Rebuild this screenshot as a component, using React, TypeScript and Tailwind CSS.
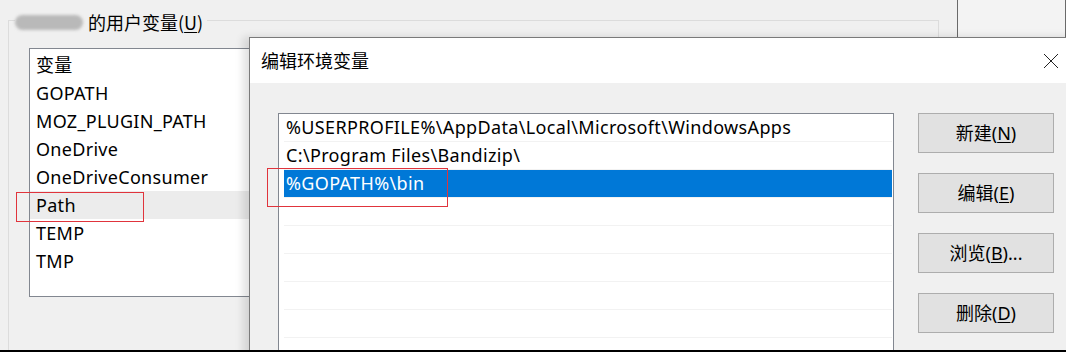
const leftVars = ['变量', 'GOPATH', 'MOZ_PLUGIN_PATH', 'OneDrive', 'OneDriveConsumer', 'Path', 'TEMP', 'TMP']

const paths = [
  '%USERPROFILE%\\AppData\\Local\\Microsoft\\WindowsApps',
  'C:\\Program Files\\Bandizip\\',
  '%GOPATH%\\bin',
  '',
  '',
  '',
  '',
  '',
]

function Btn({ label, k, tail = '' }: { label: string; k: string; tail?: string }) {
  return (
    <div className="w-[136px] h-[40px] shrink-0 bg-[#e1e1e1] border border-[#adadad] flex items-center justify-center text-[18px] text-black">
      {label}(<span className="underline underline-offset-2">{k}</span>){tail}
    </div>
  )
}

export default function App() {
  return (
    <div className="relative w-[1066px] h-[352px] overflow-hidden bg-[#f0f0f0] font-['Noto_Sans','Noto_Sans_CJK_SC',sans-serif] text-black border-b-2 border-black">
      {/* background window strip */}
      <div className="absolute left-[957px] top-0 w-[109px] h-[37px] bg-[#f3f3f3] border-l border-r border-[#6a6a6a]" />

      {/* user variables group box */}
      <div className="absolute left-[8px] top-[20px] w-[931px] h-[340px] border-l border-t border-r border-[#dcdcdc]">
        <div className="absolute -top-[9px] left-[6px] flex items-center gap-[5px] bg-[#f0f0f0] pr-1">
          <div className="w-[68px] h-[15px] rounded-full bg-[#b9b9b9] blur-[1.5px]" />
          <span className="text-[18px] leading-[20px] font-['Noto_Sans_CJK_SC',sans-serif]">
            的用户变量(<span className="underline underline-offset-2">U</span>)
          </span>
        </div>

        <div className="absolute left-[20px] top-[27px] w-[300px] h-[249px] bg-white border border-[#828790] pt-[2px]">
          {leftVars.map((v) => (
            <div
              key={v}
              className={`h-[28px] flex items-center pl-[6px] text-[18px] tracking-[0.3px] ${v === 'Path' ? 'bg-[#ececec]' : ''}`}
            >
              {v}
            </div>
          ))}
        </div>
      </div>

      {/* red marker on Path */}
      <div className="absolute left-[16px] top-[192px] w-[128px] h-[30px] border border-[#e0343c] z-10" />

      {/* edit dialog */}
      <div className="absolute left-[249px] top-[37px] w-[830px] h-[360px] border-l border-t border-[#7a7a7a] bg-[#f0f0f0] shadow-[-6px_0_8px_rgba(0,0,0,0.12)] flex flex-col z-20">
        <div className="h-[45px] shrink-0 bg-white flex items-center justify-between pl-[11px] pr-[20px]">
          <span className="text-[18px] font-['Noto_Sans_CJK_SC',sans-serif]">编辑环境变量</span>
          <svg width="16" height="16" viewBox="0 0 16 16">
            <path d="M1 1 L15 15 M15 1 L1 15" stroke="#222" strokeWidth="1" fill="none" />
          </svg>
        </div>

        <div className="flex pt-[30px] pl-[28px] gap-[24px]">
          <div className="w-[616px] h-[260px] shrink-0 bg-white border border-[#828790] pl-[5px] pr-[1px]">
            {paths.map((p, i) => (
              <div
                key={i}
                className={`h-[28px] flex items-center text-[18px] tracking-[0.35px] border-b border-[#f2f2f2] pl-[2px] ${i === 2 ? 'bg-[#0078d7] text-white' : ''}`}
              >
                {p}
              </div>
            ))}
          </div>

          <div className="flex flex-col gap-[20px]">
            <Btn label="新建" k="N" />
            <Btn label="编辑" k="E" />
            <Btn label="浏览" k="B" tail="..." />
            <Btn label="删除" k="D" />
          </div>
        </div>
      </div>

      {/* red marker on %GOPATH%\bin */}
      <div className="absolute left-[267px] top-[168px] w-[181px] h-[39px] border border-[#e0343c] z-30" />
    </div>
  )
}
